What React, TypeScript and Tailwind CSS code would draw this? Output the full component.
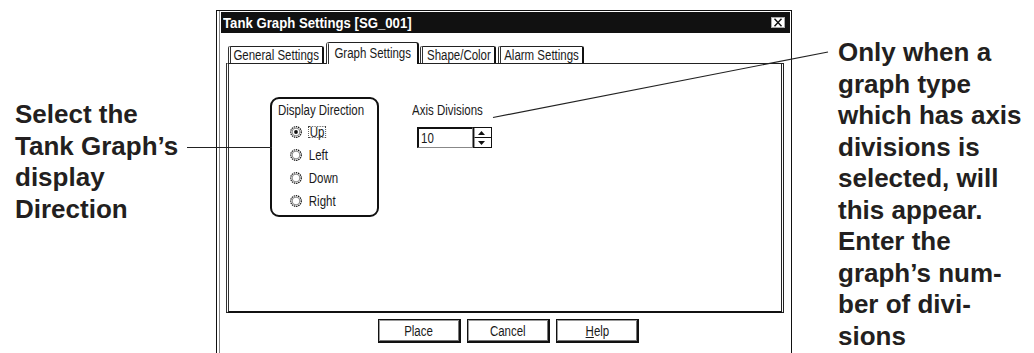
import React from "react";

const dlgFont = { fontFamily: '"Liberation Sans", Arial, sans-serif' };

function N({ children, c, className = "" }: { children: React.ReactNode; c?: boolean; className?: string }) {
  return (
    <span className={`inline-block whitespace-nowrap scale-x-[0.82] ${c ? "origin-center" : "origin-left"} ${className}`}>{children}</span>
  );
}

function Radio({ checked }: { checked?: boolean }) {
  return (
    <svg width="12" height="12" viewBox="0 0 12 12" className="shrink-0">
      <circle cx="6" cy="6" r="5.3" fill="white" stroke="#111" strokeWidth="1.2" strokeDasharray="1.4 0.8" />
      <circle cx="6" cy="6" r="3.9" fill="none" stroke="#777" strokeWidth="0.9" />
      {checked && <circle cx="6" cy="6" r="1.9" fill="#111" />}
    </svg>
  );
}

function Tab({ label, w, selected, ml }: { label: string; w: string; selected?: boolean; ml: string }) {
  if (selected) {
    return (
      <div
        className={`${w} ${ml} h-[22px] bg-white border-t border-t-[#222] border-l-[3px] border-l-[#333] border-double border-r-2 border-r-[#111] border-b-0 rounded-t-[3px] flex justify-center pt-[2px] text-[14px] leading-[16px] text-[#1a1a1a]`}
      >
        <N c>{label}</N>
      </div>
    );
  }
  return (
    <div
      className={`${w} ${ml} h-[17px] mb-[1px] bg-white border-t border-t-[#222] border-l-[3px] border-l-[#333] border-double border-r-2 border-r-[#111] border-b-0 rounded-t-[2px] flex justify-center items-center text-[14px] leading-[16px] text-[#1a1a1a]`}
    >
      <N c>{label}</N>
    </div>
  );
}

function Btn({ children }: { children: React.ReactNode }) {
  return (
    <div className="w-[83px] h-[24px] border border-[#111] border-b-2 border-r-2 shadow-[inset_1px_1px_0_#9a9a9a,inset_-1px_-1px_0_#777] flex items-center justify-center text-[14px] leading-[16px] text-[#1a1a1a] bg-white">
      <N c>{children}</N>
    </div>
  );
}

export default function App() {
  return (
    <div className="relative flex items-start w-[1034px] h-[353px] overflow-hidden bg-white">
      {/* left annotation */}
      <div
        className="w-[216px] shrink-0 pl-[15px] pt-[99px] text-[26px] leading-[31.5px] font-bold text-[#231f20] whitespace-nowrap"
        style={{ fontFamily: '"Liberation Sans", Arial, sans-serif' }}
      >
        Select the
        <br />
        Tank Graph’s
        <br />
        display
        <br />
        Direction
      </div>

      {/* dialog */}
      <div className="mt-[10px] w-[576px] h-[360px] shrink-0 border-l border-t border-r border-[#111] bg-white" style={dlgFont}>
        <div className="ml-[2px] h-full border-l border-[#8a8a8a] pl-[1px] pr-[1px] flex flex-col">
          {/* title bar */}
          <div className="mt-[1px] h-[21px] bg-[#111] flex items-center justify-between pl-[2px] pr-[4px]">
            <span className="inline-block whitespace-nowrap scale-x-[0.85] origin-left text-white font-bold text-[15.5px] leading-[18px]">
              Tank Graph Settings [SG_001]
            </span>
            <svg width="16" height="13" viewBox="0 0 16 13">
              <rect x="0.5" y="0.5" width="15" height="12" fill="white" stroke="#111" />
              <rect x="1.5" y="1.5" width="13" height="10" fill="none" stroke="#aaa" />
              <path d="M4.5 2.8 L11.5 10.2 M11.5 2.8 L4.5 10.2" stroke="#111" strokeWidth="1.4" />
            </svg>
          </div>

          {/* tabs */}
          <div className="relative z-10 mt-[9px] -mb-[1px] h-[22px] pl-[7px] flex items-end">
            <Tab label="General Settings" w="w-[96px]" ml="ml-0" />
            <Tab label="Graph Settings" w="w-[93px]" ml="ml-[2px]" selected />
            <Tab label="Shape/Color" w="w-[76px]" ml="ml-[1px]" />
            <Tab label="Alarm Settings" w="w-[86px]" ml="ml-[2px]" />
          </div>

          {/* panel */}
          <div className="ml-[5px] w-[558px] h-[250px] border-t border-t-[#222] border-l-[3px] border-l-[#333] border-r-[3px] border-r-[#222] border-double border-b-2 border-b-[#111] flex items-start text-[#1a1a1a]">
            {/* group box */}
            <div className="ml-[41px] mt-[33px] w-[109px] h-[120px] border-2 border-[#111] rounded-[9px] pl-[6px] pt-[3px] flex flex-col">
              <div className="text-[14px] leading-[16px]">
                <N>Display Direction</N>
              </div>
              <div className="mt-[2px] flex flex-col pl-[12px]">
                {[
                  { l: "Up", c: true },
                  { l: "Left" },
                  { l: "Down" },
                  { l: "Right" },
                ].map((r) => (
                  <div key={r.l} className="h-[23px] flex items-center gap-[6px]">
                    <Radio checked={r.c} />
                    {r.c ? (
                      <N className="border border-dotted border-[#444] px-[1px] text-[14px] leading-[11px] h-[12px]">{r.l}</N>
                    ) : (
                      <N className="text-[14px] leading-[16px] pl-[1px]">{r.l}</N>
                    )}
                  </div>
                ))}
              </div>
            </div>

            {/* axis divisions */}
            <div className="ml-[33px] mt-[38px] flex flex-col">
              <div className="text-[14px] leading-[16px]">
                <N>Axis Divisions</N>
              </div>
              <div className="mt-[9px] ml-[5px] flex">
                <div className="w-[56px] h-[21px] border-t-2 border-l-2 border-[#111] border-b border-r border-b-[#888] border-r-[#888] flex items-center pl-[2px] text-[14px] leading-[16px]">
                  <N>10</N>
                </div>
                <div className="w-[19px] h-[21px] flex flex-col border border-[#111]">
                  <div className="h-[10px] border-b border-[#111] border-l border-l-[#999] flex items-center pl-[3px]">
                    <svg width="7" height="4" viewBox="0 0 7 4"><path d="M0 4 L3.5 0 L7 4 Z" fill="#111" /></svg>
                  </div>
                  <div className="flex-1 border-l border-l-[#999] flex items-center pl-[3px]">
                    <svg width="7" height="4" viewBox="0 0 7 4"><path d="M0 0 L3.5 4 L7 0 Z" fill="#111" /></svg>
                  </div>
                </div>
              </div>
            </div>
          </div>

          {/* buttons */}
          <div className="mt-[6px] pl-[157px] flex gap-[6px]">
            <Btn>Place</Btn>
            <Btn>Cancel</Btn>
            <Btn>
              <span className="underline">H</span>elp
            </Btn>
          </div>
        </div>
      </div>

      {/* right annotation */}
      <div
        className="pl-[46px] pt-[37px] text-[26px] leading-[31.5px] font-bold text-[#231f20] whitespace-nowrap"
        style={{ fontFamily: '"Liberation Sans", Arial, sans-serif' }}
      >
        Only when a
        <br />
        graph type
        <br />
        which has axis
        <br />
        divisions is
        <br />
        selected, will
        <br />
        this appear.
        <br />
        Enter the
        <br />
        graph’s num-
        <br />
        ber of divi-
        <br />
        sions
      </div>

      {/* leader lines */}
      <svg className="absolute inset-0 pointer-events-none" width="1034" height="353" viewBox="0 0 1034 353">
        <path d="M187 147.5 H272" stroke="#222" strokeWidth="1.2" />
        <path d="M493 117.5 L828 52" stroke="#222" strokeWidth="1.2" />
      </svg>
    </div>
  );
}
